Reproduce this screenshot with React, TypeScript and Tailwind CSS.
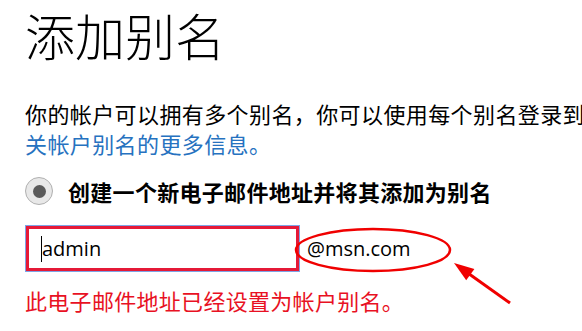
export default function App() {
  return (
    <div className="relative w-[582px] h-[331px] overflow-hidden bg-white font-['Noto_Sans_CJK_SC',sans-serif] text-black">
      <div className="w-[900px] pl-[25px] pt-[9px]">
        <h1 className="text-[50px] font-light leading-none">添加别名</h1>

        <p className="mt-[39px] text-[22px] leading-[30px] tracking-[0.4px]">
          <span className="block whitespace-nowrap">
            你的帐户可以拥有多个别名，你可以使用每个别名登录到 Microsoft 服务。
            <span className="text-[#2672c0]">了解有</span>
          </span>
          <a className="text-[#2672c0]">关帐户别名的更多信息。</a>
        </p>

        <div className="mt-[19px] flex items-center gap-[15px]">
          <div className="flex h-[28px] w-[28px] items-center justify-center rounded-full border border-[#b0b0b0] bg-[#e8e8e8]">
            <div className="h-[13px] w-[13px] rounded-full bg-[#5a5a5a]" />
          </div>
          <span className="text-[22px] font-bold leading-[28px] tracking-[0.3px]">创建一个新电子邮件地址并将其添加为别名</span>
        </div>

        <div className="mt-[20px] flex items-center">
          <div className="w-[275px] border border-[#7ea4e6]">
            <div className="flex h-[45px] items-center border-[3px] border-[#e51937] pl-[12px]">
              <span className="h-[26px] w-px bg-black" />
              <span className="font-['Open_Sans',sans-serif] text-[20px] leading-none">admin</span>
            </div>
          </div>
          <span className="ml-[7px] font-['Open_Sans',sans-serif] text-[20px] leading-none">@msn.com</span>
        </div>

        <p className="mt-[13px] text-[22px] leading-[30px] tracking-[0.3px] text-[#e81123]">此电子邮件地址已经设置为帐户别名。</p>
      </div>

      <svg className="pointer-events-none absolute inset-0" width="582" height="331" viewBox="0 0 582 331">
        <ellipse cx="373" cy="250" rx="77" ry="21" fill="none" stroke="#f00000" strokeWidth="2.5" />
        <line x1="510" y1="303" x2="465" y2="271" stroke="#f00000" strokeWidth="3" />
        <polygon points="454,263 474.4,268.9 466.2,280.3" fill="#f00000" />
      </svg>
    </div>
  )
}
